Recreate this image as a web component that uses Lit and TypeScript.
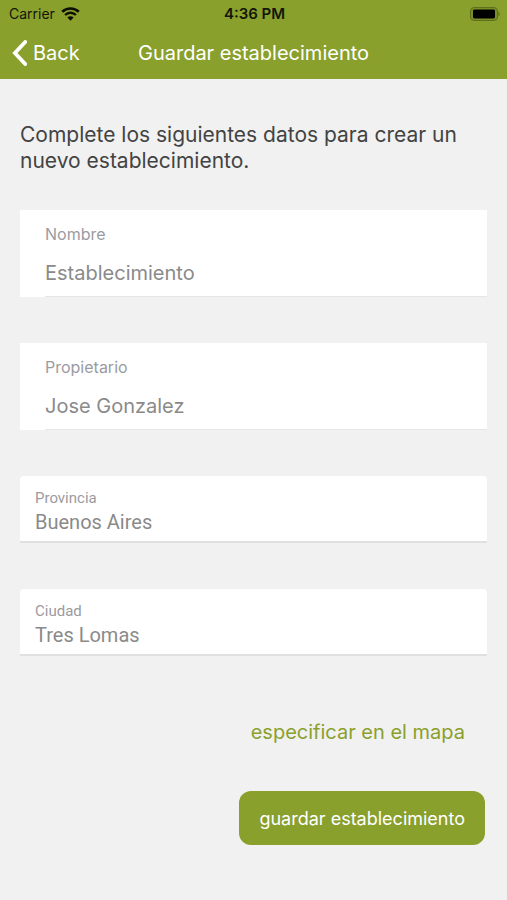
import { LitElement, html, css } from "lit";
import { customElement, property } from "lit/decorators.js";

@customElement("form-field")
class FormField extends LitElement {
  @property() label = "";
  @property() value = "";
  @property() variant: "inset" | "filled" = "inset";

  static styles = css`
    :host {
      display: block;
    }
    .field {
      display: flex;
      flex-direction: column;
      box-sizing: border-box;
      background: #fff;
      color: #8a8a8a;
    }
    label {
      color: #9b9b9f;
    }
    input {
      width: 100%;
      min-width: 0;
      box-sizing: border-box;
      margin: 0;
      padding: 0;
      border: 0;
      outline: 0;
      background: transparent;
      color: inherit;
      font: inherit;
    }
    .inset {
      padding: 12px 0 0 25px;
      font-family: Inter, "Liberation Sans", sans-serif;
    }
    .inset label {
      font-size: 16px;
      line-height: 24px;
    }
    .inset input {
      height: 51px;
      padding-top: 4px;
      border-bottom: 1px solid #e6e6e6;
      font-size: 20px;
    }
    .filled {
      padding: 12px 15px 8px;
      border-bottom: 2px solid #e0e0e0;
      border-radius: 4px 4px 0 0;
      font-family: Roboto, "Liberation Sans", sans-serif;
    }
    .filled label {
      font-size: 15px;
      line-height: 20px;
    }
    .filled input {
      height: 25px;
      padding-top: 2px;
      font-size: 20px;
    }
  `;

  render() {
    return html`
      <div class="field ${this.variant}">
        <label for="control">${this.label}</label>
        <input id="control" type="text" .value=${this.value} />
      </div>
    `;
  }
}

@customElement("app-root")
class AppRoot extends LitElement {
  static styles = css`
    :host {
      display: block;
      min-height: 100vh;
      background: #f1f1f1;
      color: #434343;
      font-family: Inter, "Liberation Sans", sans-serif;
    }
    button {
      margin: 0;
      border: 0;
      font: inherit;
      cursor: pointer;
    }
    header {
      background: #8aa02c;
      color: #fff;
    }
    .status,
    .nav {
      display: grid;
      grid-template-columns: 1fr auto 1fr;
      align-items: center;
    }
    .status {
      height: 27px;
      padding: 0 7px 0 9px;
      color: #12150a;
      font-size: 14px;
    }
    .carrier {
      display: flex;
      align-items: center;
      gap: 6px;
    }
    .time {
      font-size: 15px;
      font-weight: 600;
    }
    .battery {
      justify-self: end;
    }
    svg {
      display: block;
    }
    .nav {
      height: 52px;
      padding: 0 12px;
      font-size: 20px;
    }
    .back {
      display: flex;
      align-items: center;
      justify-self: start;
      gap: 6px;
      padding: 0;
      background: transparent;
      color: inherit;
    }
    h1 {
      margin: 0;
      font-size: 20px;
      font-weight: 400;
    }
    main {
      padding: 43px 20px 55px;
    }
    .intro {
      margin: 0 0 36px;
      font-size: 21px;
      line-height: 26px;
    }
    form {
      display: grid;
      gap: 46px;
    }
    .actions {
      display: flex;
      flex-direction: column;
      align-items: flex-end;
      gap: 46px;
      padding-right: 2px;
      font-size: 20px;
    }
    .map {
      margin: 17px 20px 0 0;
      color: #8aa02c;
      line-height: 26px;
      text-decoration: none;
    }
    .save {
      height: 54px;
      padding: 0 20px;
      border-radius: 12px;
      background: #8aa02c;
      color: #fff;
      font-size: 18px;
    }
  `;

  render() {
    return html`
      <header>
        <div class="status">
          <span class="carrier">
            Carrier
            <svg width="19" height="14" viewBox="0 0 19 14" fill="none" stroke="#0c0f04" aria-hidden="true">
              <path d="M1.2 4.8a12 12 0 0 1 16.6 0" stroke-width="2.6" />
              <path d="M4.1 8a7.7 7.7 0 0 1 10.8 0" stroke-width="2.4" />
              <path d="M9.5 13.8 6.4 10.6a4.4 4.4 0 0 1 6.2 0Z" fill="#0c0f04" stroke="none" />
            </svg>
          </span>
          <span class="time">4:36 PM</span>
          <svg class="battery" width="30" height="14" viewBox="0 0 30 14" aria-label="Battery full" role="img">
            <rect x="0.5" y="0.5" width="27" height="13" rx="3.5" fill="#7a8e27" stroke="#5f6f1e" />
            <rect x="3" y="2.6" width="22" height="8.8" rx="1.4" fill="#000" />
            <path d="M28.4 4.8c1.8.7 1.8 3.7 0 4.4Z" fill="#5f6f1e" />
          </svg>
        </div>
        <div class="nav">
          <button class="back" type="button">
            <svg width="15" height="26" viewBox="0 0 15 26" fill="none" stroke="#fff" stroke-width="3.8" aria-hidden="true">
              <path d="M13.2 2 2.9 13l10.3 11" stroke-linecap="round" />
            </svg>
            Back
          </button>
          <h1>Guardar establecimiento</h1>
        </div>
      </header>
      <main>
        <p class="intro">Complete los siguientes datos para crear un nuevo establecimiento.</p>
        <form>
          <form-field label="Nombre" value="Establecimiento"></form-field>
          <form-field label="Propietario" value="Jose Gonzalez"></form-field>
          <form-field variant="filled" label="Provincia" value="Buenos Aires"></form-field>
          <form-field variant="filled" label="Ciudad" value="Tres Lomas"></form-field>
          <div class="actions">
            <a class="map" href="#mapa">especificar en el mapa</a>
            <button class="save" type="button">guardar establecimiento</button>
          </div>
        </form>
      </main>
    `;
  }
}
